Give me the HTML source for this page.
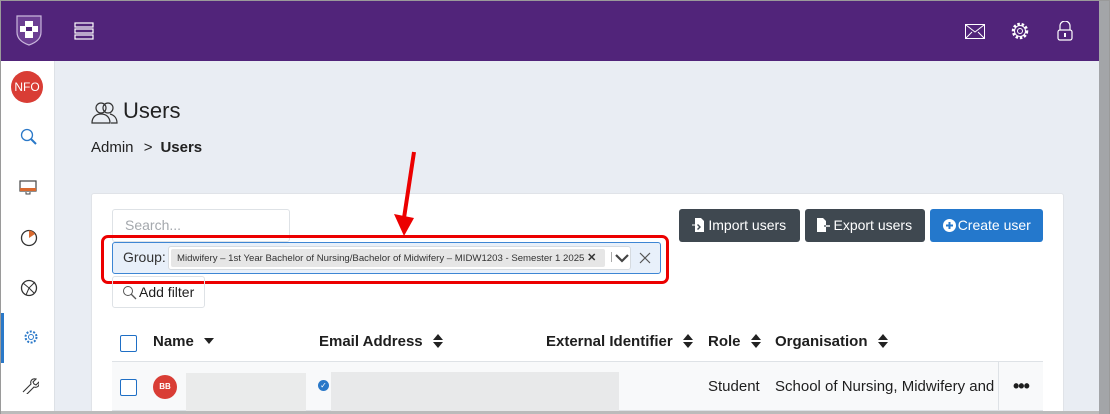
<!DOCTYPE html>
<html><head><meta charset="utf-8"><style>
*{box-sizing:border-box;margin:0;padding:0}
html,body{width:1110px;height:414px;overflow:hidden}
body{background:#e9edf3;font-family:"Liberation Sans",sans-serif;color:#1e1e1e;position:relative}
.frame{position:absolute;inset:0;border:1px solid #9a9a9a;border-bottom:none;z-index:50;pointer-events:none}
.top{position:absolute;left:0;top:0;width:1099px;height:61px;background:#51247a}
.scroll{position:absolute;left:1099px;top:0;width:11px;height:414px;background:#a3a5a8}
.side{position:absolute;left:0;top:61px;width:55px;height:353px;background:#fff;border-right:1px solid #dde1e6}
.abs{position:absolute}
.card{position:absolute;left:91px;top:193px;width:973px;height:230px;background:#fff;border:1px solid #e0e3e8;border-radius:3px}
.btn{position:absolute;top:209px;height:33px;border-radius:3px;color:#fff;font-size:14px;line-height:33px;text-align:center}
.cb{position:absolute;width:17px;height:17px;border:1.5px solid #1f6fc5;border-radius:2px;background:#fff}
.th{position:absolute;top:333px;font-size:15px;font-weight:bold;color:#1e1e1e}
.sort{display:inline-block;vertical-align:middle;margin-left:6px;margin-top:-3px}
</style></head><body>
<div class="frame"></div>
<div class="top"></div>
<svg class="abs" style="left:15px;top:14px" width="28" height="33" viewBox="0 0 28 33"><path d="M2 2h24v16c0 7-6 11-12 13C8 29 2 25 2 18z" fill="#6c3f93" stroke="#c9b6dc" stroke-width="1.2"/><path d="M10 7h8v17h-8zM5 12h18v6H5z" fill="#fff"/><rect x="11" y="13" width="6" height="4" fill="#51247a"/></svg>
<svg class="abs" style="left:74px;top:22px" width="20" height="18"><rect x="1" y="1" width="18" height="4" fill="none" stroke="#fff" stroke-width="1.2"/><rect x="1" y="7" width="18" height="4" fill="none" stroke="#fff" stroke-width="1.2"/><rect x="1" y="13" width="18" height="4" fill="none" stroke="#fff" stroke-width="1.2"/></svg>
<svg class="abs" style="left:965px;top:24px" width="20" height="15"><rect x="0.5" y="0.5" width="19" height="14" fill="none" stroke="#fff"/><path d="M1 1l9 7 9-7M1 14l6-6M19 14l-6-6" fill="none" stroke="#fff"/></svg>
<svg class="abs" style="left:1010px;top:21px" width="20" height="20" viewBox="0 0 20 20"><circle cx="10" cy="10" r="7" fill="none" stroke="#fff" stroke-width="2.5" stroke-dasharray="2.5 1.8"/><circle cx="10" cy="10" r="5.5" fill="none" stroke="#fff" stroke-width="1"/><circle cx="10" cy="10" r="2.5" fill="none" stroke="#fff" stroke-width="1"/></svg>
<svg class="abs" style="left:1057px;top:21px" width="16" height="20"><path d="M3 9V5a5 5 0 0110 0v4" fill="none" stroke="#fff" stroke-width="1.2"/><rect x="1" y="9" width="14" height="10" rx="2" fill="none" stroke="#fff" stroke-width="1.2"/><rect x="7" y="12" width="2" height="4" fill="#fff"/></svg>
<div class="scroll"></div>
<div class="side"></div>
<div class="abs" style="left:11px;top:71px;width:32px;height:32px;border-radius:50%;background:#d93d35;color:#fff;font-size:12px;line-height:32px;text-align:center">NFO</div>
<svg class="abs" style="left:20px;top:128px" width="18" height="18"><circle cx="7" cy="7" r="5.5" fill="none" stroke="#2a78c8" stroke-width="1.3"/><path d="M11 11l5 5" stroke="#2a78c8" stroke-width="2"/></svg>
<svg class="abs" style="left:19px;top:180px" width="18" height="15"><rect x="1" y="1" width="16" height="10" fill="#fff" stroke="#444" stroke-width="1.2"/><rect x="1" y="8" width="16" height="3" fill="#d96a30"/><path d="M7 12v2h4v-2" stroke="#444" fill="none"/></svg>
<svg class="abs" style="left:20px;top:229px" width="18" height="18"><circle cx="9" cy="9" r="7.5" fill="none" stroke="#333" stroke-width="1.3"/><path d="M9 9V1.5A7.5 7.5 0 0115 5z" fill="#d96a30"/></svg>
<svg class="abs" style="left:20px;top:279px" width="18" height="18"><circle cx="9" cy="9" r="7.5" fill="none" stroke="#333" stroke-width="1.3"/><path d="M3 4l6 5 6-6M9 9l-3 7M9 9l5 5" stroke="#333" fill="none"/></svg>
<div class="abs" style="left:0;top:313px;width:4px;height:50px;background:#2a78c8"></div>
<svg class="abs" style="left:23px;top:329px" width="16" height="16"><circle cx="8" cy="8" r="5.5" fill="none" stroke="#2a78c8" stroke-width="2" stroke-dasharray="2 1.5"/><circle cx="8" cy="8" r="2.5" fill="none" stroke="#2a78c8"/></svg>
<svg class="abs" style="left:21px;top:376px" width="18" height="18"><path d="M2 16l8-8c-1-3 1-6 5-5l-3 3 1 2 2 1 3-3c1 4-2 6-5 5l-8 8" fill="none" stroke="#333" stroke-width="1.1"/></svg>
<svg class="abs" style="left:91px;top:101px" width="28" height="24"><circle cx="10" cy="7" r="5" fill="none" stroke="#333" stroke-width="1.2"/><path d="M1 22c0-6 4-9 9-9s9 3 9 9z" fill="none" stroke="#333" stroke-width="1.2"/><circle cx="17" cy="7" r="5" fill="none" stroke="#333" stroke-width="1.2"/><path d="M19 13c4 1 7 4 7 9h-6" fill="none" stroke="#333" stroke-width="1.2"/></svg>
<div class="abs" style="left:123px;top:98px;font-size:22px;color:#222">Users</div>
<div class="abs" style="left:91px;top:139px;font-size:15px;color:#222">Admin <span style="margin:0 8px 0 6px">&gt;</span><b>Users</b></div>
<div class="card"></div>
<div class="abs" style="left:112px;top:209px;width:178px;height:33px;border:1px solid #dee2e6;border-radius:3px;font-size:14px;color:#a4a8ad;padding:7px 12px">Search...</div>
<div class="abs" style="left:112px;top:242px;width:549px;height:32px;background:#e8f0fa;border:1px solid #3d86d4;border-radius:3px"></div>
<div class="abs" style="left:123px;top:249px;font-size:14px;color:#333">Group:</div>
<div class="abs" style="left:168px;top:246px;width:463px;height:24px;background:#fff;border:1px solid #d6dbe0;border-radius:3px"></div>
<div class="abs" style="left:171px;top:249px;width:434px;height:18px;background:#e6e6e6;border-radius:2px;font-size:9.6px;line-height:18px;padding-left:6px;color:#333;white-space:nowrap;overflow:hidden">Midwifery – 1st Year Bachelor of Nursing/Bachelor of Midwifery – MIDW1203 - Semester 1 2025 <b style="font-size:11px">✕</b></div>
<div class="abs" style="left:611px;top:252px;width:1px;height:10px;background:#aaa"></div>
<svg class="abs" style="left:615px;top:253px" width="14" height="10"><path d="M1 2l6 6 6-6" fill="none" stroke="#444" stroke-width="2.2"/></svg>
<svg class="abs" style="left:639px;top:252px" width="12" height="12"><path d="M1 1l10 10M11 1L1 11" stroke="#555" stroke-width="1.2"/></svg>
<div class="abs" style="left:101px;top:235px;width:568px;height:49px;border:3px solid #ec0000;border-radius:7px"></div>
<svg class="abs" style="left:390px;top:150px" width="30" height="90"><path d="M24 2L14 68" stroke="#ec0000" stroke-width="4"/><path d="M4 64l10 22 10-18z" fill="#ec0000"/></svg>
<div class="abs" style="left:112px;top:276px;width:93px;height:32px;border:1px solid #dee2e6;border-radius:3px;font-size:14px;padding:7px 0 0 26px">Add filter</div>
<svg class="abs" style="left:122px;top:285px" width="16" height="16"><circle cx="6" cy="6" r="4.5" fill="none" stroke="#555"/><path d="M9 9l5 5" stroke="#555" stroke-width="1.3"/></svg>
<div class="btn" style="left:679px;width:121px;background:#3f4850">&nbsp;&nbsp;&nbsp;&nbsp;Import users</div>
<svg class="abs" style="left:691px;top:217px" width="14" height="16"><path d="M4 1h6l3 3v11H4v-5h4l-2 2 1 1 3-3-3-3-1 1 2 2H4z" fill="#fff"/><path d="M1 8h4" stroke="#fff"/></svg>
<div class="btn" style="left:805px;width:120px;background:#3f4850">&nbsp;&nbsp;&nbsp;&nbsp;Export users</div>
<svg class="abs" style="left:816px;top:217px" width="16" height="16"><path d="M1 1h6l3 3v11H1z" fill="#fff"/><path d="M8 9h5l-2-2M13 9l-2 2" stroke="#3f4850" stroke-width="1.3" fill="none"/><path d="M10 9h4" stroke="#fff" stroke-width="1.5"/></svg>
<div class="btn" style="left:930px;width:113px;background:#2478cc">&nbsp;&nbsp;&nbsp;&nbsp;Create user</div>
<svg class="abs" style="left:943px;top:219px" width="13" height="13"><circle cx="6.5" cy="6.5" r="6.5" fill="#fff"/><path d="M6.5 3v7M3 6.5h7" stroke="#2478cc" stroke-width="2"/></svg>
<div class="cb" style="left:120px;top:335px"></div>
<div class="th" style="left:153px">Name <svg class="sort" width="10" height="8"><path d="M0 1h10L5 7z" fill="#222"/></svg></div>
<div class="th" style="left:319px">Email Address <svg class="sort" width="10" height="14"><path d="M0 6h10L5 0zM0 8h10l-5 6z" fill="#222"/></svg></div>
<div class="th" style="left:546px">External Identifier <svg class="sort" width="10" height="14"><path d="M0 6h10L5 0zM0 8h10l-5 6z" fill="#222"/></svg></div>
<div class="th" style="left:708px">Role <svg class="sort" width="10" height="14"><path d="M0 6h10L5 0zM0 8h10l-5 6z" fill="#222"/></svg></div>
<div class="th" style="left:775px">Organisation <svg class="sort" width="10" height="14"><path d="M0 6h10L5 0zM0 8h10l-5 6z" fill="#222"/></svg></div>
<div class="abs" style="left:112px;top:361px;width:931px;height:1px;background:#dee2e6"></div>
<div class="abs" style="left:112px;top:362px;width:931px;height:48px;background:#f8f9fa"></div>
<div class="abs" style="left:112px;top:410px;width:931px;height:1px;background:#dee2e6"></div>
<div class="abs" style="left:998px;top:362px;width:1px;height:52px;background:#dee2e6"></div>
<div class="cb" style="left:120px;top:379px"></div>
<div class="abs" style="left:153px;top:375px;width:24px;height:24px;border-radius:50%;background:#d93d35;color:#fff;font-size:8px;line-height:24px;text-align:center;font-weight:bold">BB</div>
<div class="abs" style="left:186px;top:373px;width:120px;height:41px;background:#eaebeb"></div>
<div class="abs" style="left:318px;top:380px;width:11px;height:11px;border-radius:50%;background:#2a78c8;color:#fff;font-size:8px;line-height:11px;text-align:center">✓</div>
<div class="abs" style="left:331px;top:372px;width:288px;height:42px;background:#e8e9ea"></div>
<div class="abs" style="left:708px;top:378px;font-size:15px">Student</div>
<div class="abs" style="left:775px;top:378px;width:222px;font-size:15px;white-space:nowrap;overflow:hidden">School of Nursing, Midwifery and Social</div>
<div class="abs" style="left:1013px;top:376px;font-size:18px;font-weight:bold;letter-spacing:-1px">•••</div>
<div class="abs" style="left:0;top:411px;width:1099px;height:3px;background:#bbb"></div>
</body></html>
